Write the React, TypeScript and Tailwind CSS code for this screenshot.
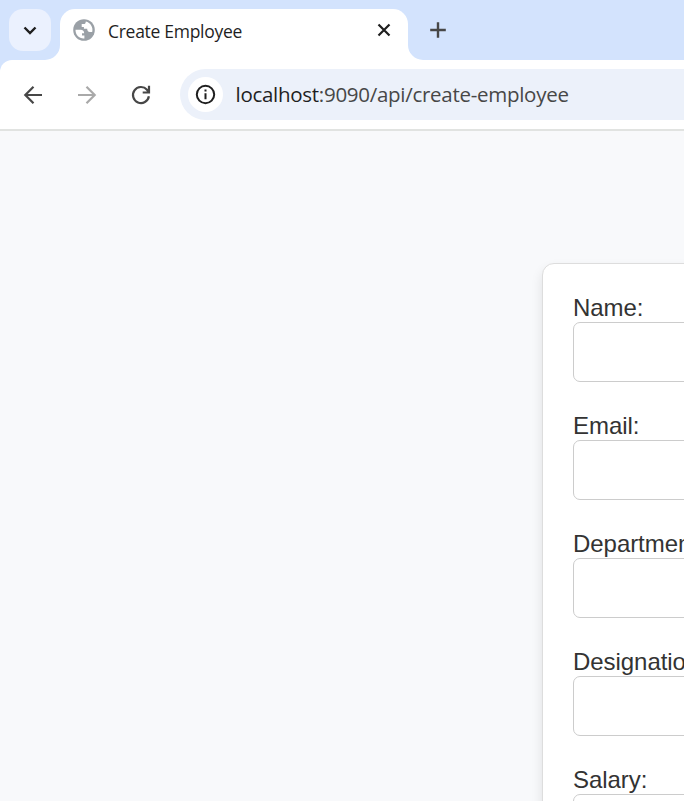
import React from "react";

const fields = ["Name:", "Email:", "Department:", "Designation:", "Salary:"];

function Globe() {
  return (
    <svg className="h-6 w-6 shrink-0" viewBox="0 0 24 24">
      <circle cx="12" cy="12" r="10.8" fill="#9aa0a6" />
      <path
        d="M3.500 11.800h5c2.400 0 3.700 1.200 3.700 3.500h-2.200v2.200h2.400v3c-5 .5-9-3.500-8.900-8.700zM13.800 3.500c0 1.600-.7 2.600-2.300 2.600H9.700v3h2.200v1.700h3.300c0 2 .8 3.100 2.600 3.100h2.400c1.200-4.500-1.700-9.300-6.400-10.400z"
        fill="#fff"
      />
    </svg>
  );
}

function TabStrip() {
  return (
    <div className="flex h-[60px] bg-[#d3e3fd] pl-[9px]">
      <button className="mt-[9px] flex h-[42px] w-[42px] shrink-0 items-center justify-center rounded-[14px] bg-[#ebf1fe]">
        <svg className="h-[42px] w-[42px]" viewBox="0 0 42 42" fill="none" stroke="#1f1f1f" strokeWidth="2.4">
          <path d="M15.500 18.500l5.500 5.500 5.500-5.500" />
        </svg>
      </button>
      <svg className="-ml-[6px] mt-[45px] h-[15px] w-[15px] shrink-0" viewBox="0 0 15 15">
        <path d="M15 0v15H0A15 15 0 0 0 15 0z" fill="#fff" />
      </svg>
      <div className="mt-[9px] flex w-[348px] shrink-0 items-center rounded-t-[15px] bg-white pb-[9px] pl-3 pr-[15px]">
        <Globe />
        <span className="ml-3 mt-[2px] flex-1 whitespace-nowrap font-['Open_Sans','Noto_Sans',sans-serif] text-[17.5px] leading-6 tracking-[-0.29px] text-[#1f1f1f]">
          Create Employee
        </span>
        <svg className="h-[18px] w-[18px]" viewBox="0 0 18 18" fill="none" stroke="#1f1f1f" strokeWidth="2.2">
          <path d="M3.500 3.500l11 11M14.500 3.500l-11 11" />
        </svg>
      </div>
      <svg className="mt-[45px] h-[15px] w-[15px] shrink-0" viewBox="0 0 15 15">
        <path d="M0 0v15h15A15 15 0 0 1 0 0z" fill="#fff" />
      </svg>
      <svg className="ml-[6px] mt-[21px] h-[18px] w-[18px]" viewBox="0 0 18 18" fill="none" stroke="#474747" strokeWidth="2.400">
        <path d="M9 1.200v15.600M1.200 9h15.600" />
      </svg>
    </div>
  );
}

function Toolbar() {
  return (
    <div className="bg-[#d3e3fd]">
      <div className="flex h-[71px] items-center rounded-tl-[12px] border-b-2 border-[#e1e3e1] bg-white pl-[21px]">
        <svg className="h-6 w-6 shrink-0" viewBox="0 0 24 24" fill="none" stroke="#474747" strokeWidth="2.200">
          <path d="M21 12H4.500M12.500 3.800L4.300 12l8.200 8.200" />
        </svg>
        <svg className="ml-[30px] h-6 w-6 shrink-0" viewBox="0 0 24 24" fill="none" stroke="#a9a9a9" strokeWidth="2.200">
          <path d="M3 12h16.500M11.500 3.800l8.200 8.200-8.200 8.200" />
        </svg>
        <svg className="ml-[30px] h-6 w-6 shrink-0" viewBox="0 0 24 24" fill="none" stroke="#474747" strokeWidth="2.200">
          <path d="M19.900 13.300A8 8 0 1 1 18 6.700L20 9.200M20 2.700v6.800h-6.300" />
        </svg>
        <div className="ml-[27px] flex h-[51px] flex-1 items-center rounded-l-full bg-[#ecf1fa] pl-2">
          <div className="flex h-[35px] w-[35px] items-center justify-center rounded-full bg-white">
            <svg className="h-[21px] w-[21px]" viewBox="0 0 21 21" fill="none" stroke="#1f1f1f" strokeWidth="2">
              <circle cx="10.500" cy="10.500" r="8.700" />
              <path d="M10.500 9.300v6M10.500 5.500v2" />
            </svg>
          </div>
          <span className="mb-[2px] ml-[12.5px] whitespace-nowrap font-['Open_Sans','Noto_Sans',sans-serif] text-[20.5px] leading-7 tracking-[-0.28px] text-[#474747]">
            <span className="text-[#1f1f1f]">localhost</span>:9090/api/create-employee
          </span>
        </div>
      </div>
    </div>
  );
}

export default function App() {
  return (
    <div className="flex h-[801px] w-[684px] flex-col overflow-hidden bg-[#f8f9fb]">
      <TabStrip />
      <Toolbar />
      <main className="min-h-0 flex-1 pl-[542px] pt-[132px]">
        <form className="flex h-[900px] w-[600px] flex-col gap-[30px] rounded-xl border border-[#dddddd] bg-white pl-[30px] pt-[30px] shadow-[0_6px_12px_rgba(0,0,0,0.1)]">
          {fields.map((label) => (
            <label key={label} className="block font-['Liberation_Sans',Arial,sans-serif] text-[24px] leading-7 tracking-[-0.05px] text-[#333333]">
              {label}
              <input className="block h-[60px] w-[500px] rounded-[7px] border border-[#cccccc] bg-white" />
            </label>
          ))}
        </form>
      </main>
    </div>
  );
}
